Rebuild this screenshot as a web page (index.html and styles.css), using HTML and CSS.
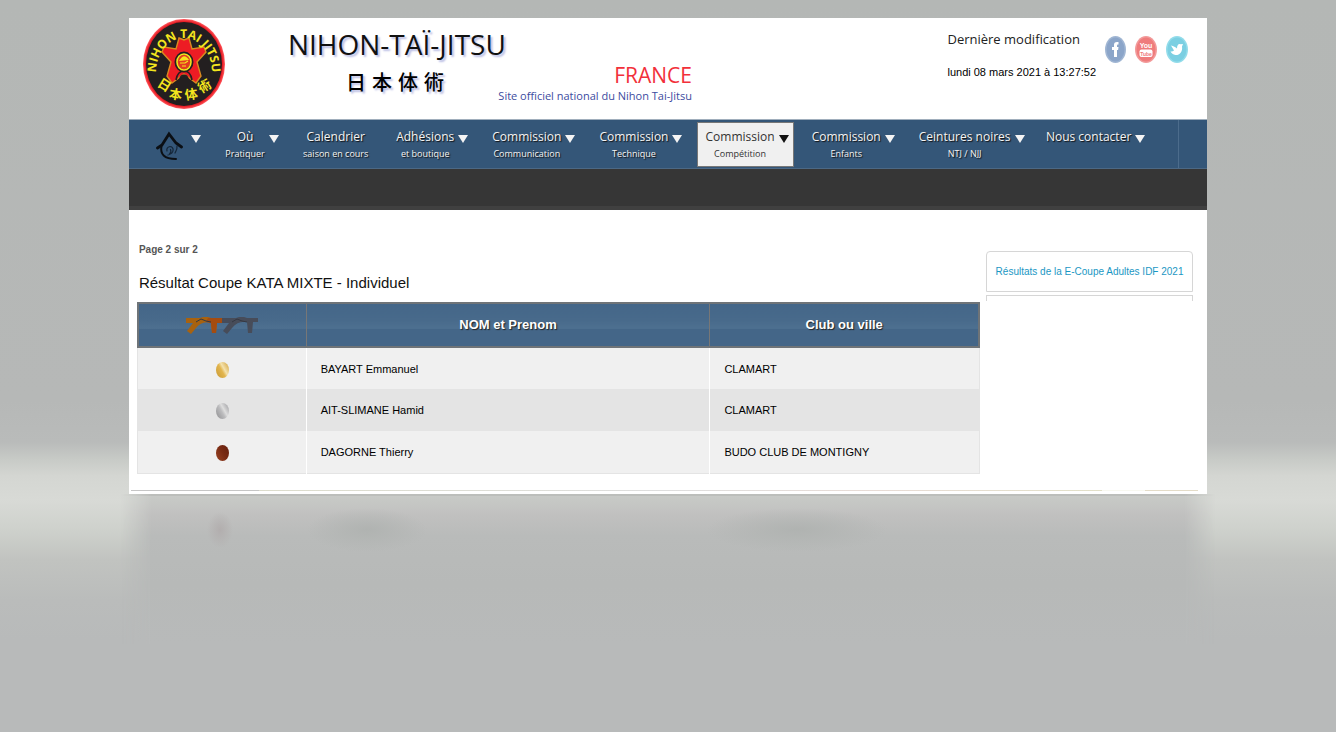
FILE: index.html
```html
<!DOCTYPE html>
<html lang="fr">
<head>
<meta charset="utf-8">
<title>Nihon-Taï-Jitsu France</title>
<link rel="stylesheet" href="styles.css">
</head>
<body>
<div class="page">
  <header class="header">
    <svg class="logo" width="84" height="92" viewBox="0 0 84 92" role="img" aria-label="Nihon Tai Jitsu">
      <defs>
        <path id="arc" d="M14 54A28 34 0 1 1 70 54"/>
        <radialGradient id="ring"><stop offset=".94" stop-color="#e81c24"/><stop offset="1" stop-color="#ff5a60"/></radialGradient>
      </defs>
      <ellipse cx="41" cy="46" rx="41" ry="45" fill="url(#ring)"/>
      <ellipse cx="41" cy="46" rx="38" ry="42" fill="#231f20"/>
      <g transform="translate(-1 0)">
      <path d="M37 20L42 22L47 20L50 31L62 29L64 34L55 44L59 58L54 65L42 56L30 65L25 58L29 44L20 34L22 29L34 31Z" fill="#ed1c24" stroke="#d88a20" stroke-width="1.4"/>
      <path d="M34 62C35 56 38 53 42 53S49 56 50 62M38 61C39 56 45 56 46 61" fill="none" stroke="#231f20" stroke-width="1.6"/>
      <ellipse cx="42" cy="44" rx="8" ry="9" fill="#e43a20" stroke="#231f20" stroke-width="3"/>
      <ellipse cx="42" cy="44" rx="7" ry="8" fill="none" stroke="#f4e51e" stroke-width="1.6"/>
      <path d="M37 43Q42 34 47 42Z" fill="#f4e51e"/>
      <path d="M38 45h5l3-2M40 48h4" fill="none" stroke="#f4e51e" stroke-width="1.2"/>
      <text class="logo-text"><textPath href="#arc" startOffset="50%">NIHON TAI JITSU</textPath></text>
      <text class="logo-kanji" transform="translate(20 71) rotate(32)">日</text>
      <text class="logo-kanji" transform="translate(33 81) rotate(9)">本</text>
      <text class="logo-kanji" transform="translate(50 81) rotate(-9)">体</text>
      <text class="logo-kanji" transform="translate(65 72) rotate(-32)">術</text>
      </g>
    </svg>
    <div class="brand">
      <h1 class="brand-title">NIHON-TAÏ-JITSU</h1>
      <div class="brand-row">
        <div class="brand-kanji"><span>日</span><span>本</span><span>体</span><span>術</span></div>
        <div class="brand-country">FRANCE</div>
      </div>
      <p class="brand-tagline">Site officiel national du Nihon Tai-Jitsu</p>
    </div>
    <div class="updated">
      <p class="updated-label">Dernière modification</p>
      <p class="updated-date">lundi 08 mars 2021 à 13:27:52</p>
    </div>
    <div class="social">
      <a href="#" aria-label="Facebook"><svg width="21" height="27" viewBox="0 0 21 27"><ellipse cx="10.500" cy="13.500" rx="10.500" ry="13.500" fill="#a0b6d3"/><ellipse cx="10.500" cy="13.500" rx="9" ry="12" fill="#8ba5c9"/><path d="M9 21V14H7v-3h2V9C9 6.500 10.200 5.500 13.500 6v2.500C12 8.400 12 8.800 12 11h1.500l-.4 3H12v7Z" fill="#fff"/></svg></a>
      <a href="#" aria-label="YouTube"><svg width="22" height="27" viewBox="0 0 22 27"><ellipse cx="11" cy="13.500" rx="11" ry="13.500" fill="#f29a9a"/><ellipse cx="11" cy="13.500" rx="9.500" ry="12" fill="#ef7c7c"/><text x="11" y="12" class="yt-you">You</text><rect x="4.500" y="13.500" width="13" height="7.500" rx="2" fill="#fff"/><text x="11" y="19.500" class="yt-tube">Tube</text></svg></a>
      <a href="#" aria-label="Twitter"><svg width="22" height="27" viewBox="0 0 22 27"><ellipse cx="11" cy="13.500" rx="11" ry="13.500" fill="#92dcea"/><ellipse cx="11" cy="13.500" rx="9.500" ry="12" fill="#7bcfe2"/><path d="M4.500 15.500C6 15.800 7 15.300 8 14.500L5 9.500C7.500 10 9.500 11 11 12.500C11 9 12.500 7.500 14.500 8.200L17 8L16 10.500C17 16 13 19.500 9.500 19C7 18.600 5.500 17.500 4.500 15.500Z" fill="#fff"/></svg></a>
    </div>
  </header>

  <nav class="nav" aria-label="Menu principal">
    <a href="#" class="item home" aria-label="Accueil">
      <svg width="27" height="30" viewBox="0 0 27 30" fill="none" stroke="#0b0f14" stroke-linecap="round"><path d="M1.500 17L6 14L13 3L20 12L25.500 16" stroke-width="2.800"/><path d="M5.500 15C4 23 8 28 20 28" stroke-width="2"/><path d="M21 15C21.500 18 20 20 19 22M12 24C19 22 18 15.500 14 15.500C11 16 10.500 18 11 20M14.500 18.500C15.500 20.500 14.500 22 13.500 23" stroke-width="1.200" stroke="#152638"/></svg>
      <i class="caret"></i></a>
    <a href="#" class="item"><span class="label wide">Où<small>Pratiquer</small></span><i class="caret"></i></a>
    <a href="#" class="item"><span class="label">Calendrier<small>saison en cours</small></span></a>
    <a href="#" class="item"><span class="label">Adhésions<small>et boutique</small></span><i class="caret"></i></a>
    <a href="#" class="item"><span class="label">Commission<small>Communication</small></span><i class="caret"></i></a>
    <a href="#" class="item"><span class="label">Commission<small>Technique</small></span><i class="caret"></i></a>
    <a href="#" class="item active"><span class="label">Commission<small>Compétition</small></span><i class="caret"></i></a>
    <a href="#" class="item"><span class="label">Commission<small>Enfants</small></span><i class="caret"></i></a>
    <a href="#" class="item"><span class="label">Ceintures noires<small>NTJ / NJJ</small></span><i class="caret"></i></a>
    <a href="#" class="item last"><span class="label">Nous contacter</span><i class="caret"></i></a>
  </nav>
  <div class="subbar"></div>

  <div class="content">
    <main class="main">
      <p class="pager">Page 2 sur 2</p>
      <h2 class="heading">Résultat Coupe KATA MIXTE - Individuel</h2>
      <table class="results">
        <thead>
          <tr>
            <th class="c-rank" scope="col"><svg class="tonfas" width="73" height="18" viewBox="0 0 73 18" role="img" aria-label="Rang">
              <path d="M0 1H14L17 0H22L25 1H36V6H31L30 16H26L25 6C19 4 14 6 10 11L5 17L1 14L7 6H0Z" fill="#a8620f"/>
              <path d="M22 1H36V6H31L30 16H26L25 6L20 5Z" fill="#a44c10"/>
              <path d="M36 1H50L53 0H58L61 1H72V5H67L66 16H62L61 5C55 4 50 6 46 11L41 17L37 14L43 6H36Z" fill="#474c59"/>
              <path d="M10 5L15 2L20 4L25 5M46 5L51 2L56 4L61 5" stroke="#353842" fill="none"/>
            </svg></th>
            <th class="c-name" scope="col">NOM et Prenom</th>
            <th scope="col">Club ou ville</th>
          </tr>
        </thead>
        <tbody>
          <tr><td class="rank"><i class="medal gold"></i></td><td>BAYART Emmanuel</td><td>CLAMART</td></tr>
          <tr><td class="rank"><i class="medal silver"></i></td><td>AIT-SLIMANE Hamid</td><td>CLAMART</td></tr>
          <tr><td class="rank"><i class="medal bronze"></i></td><td>DAGORNE Thierry</td><td>BUDO CLUB DE MONTIGNY</td></tr>
        </tbody>
      </table>
    </main>
    <aside class="side">
      <a href="#" class="side-link">Résultats de la E-Coupe Adultes IDF 2021</a>
      <div class="side-next"></div>
    </aside>
  </div>
  <div class="rule"></div>
</div>
<div class="reflection"></div>
</body>
</html>
```

FILE: styles.css
```css
* { box-sizing: border-box; }
html { min-height: 100%; }
body {
  margin: 0;
  padding-top: 18px;
  min-height: 100vh;
  font-family: "Liberation Sans", sans-serif;
  font-size: 12px;
  color: #000;
  background: linear-gradient(#b4b7b5 0, #b6b8b7 400px, #b9bbba 442px, #c8cbc7 460px, #d4d6d2 476px, #d8dad6 500px, #ced1cc 530px, #c1c3c0 560px, #babcbb 600px, #b8baba 640px, #b8baba 100%);
}
p, h1, h2 { margin: 0; font-weight: normal; }
a { color: inherit; text-decoration: none; }
.page {
  width: 80.7%;
  margin: 0 auto;
  background: #fff;
}

.header {
  display: flex;
  height: 101px;
  padding: 0 19px 0 14px;
  font-family: "Open Sans", sans-serif;
}
.logo { flex: none; }
.logo-text {
  font: bold 12px "Open Sans", sans-serif;
  fill: #f4e51e;
  text-anchor: middle;
}
.logo-kanji {
  font: bold 13px "Noto Sans CJK JP", sans-serif;
  fill: #f4e51e;
  text-anchor: middle;
}
.brand {
  width: 404px;
  margin-left: 61px;
  padding-top: 6px;
}
.brand-title {
  font: 28px/40px "Open Sans", sans-serif;
  color: #111;
  text-shadow: 2px 2px 2px #b9bde4;
  white-space: nowrap;
}
.brand-row {
  display: flex;
  justify-content: space-between;
  height: 24px;
  padding-left: 58px;
}
.brand-kanji {
  display: flex;
  gap: 6px;
  font: 500 20px/36px "Noto Sans CJK JP", sans-serif;
  text-shadow: 2px 2px 2px #b9bde4;
}
.brand-country { font-size: 21px; line-height: 22px; color: #f2303a; }
.brand-tagline {
  font-size: 11px;
  line-height: 16px;
  text-align: right;
  color: #3c4ba0;
}
.updated { margin-left: auto; padding-top: 10px; white-space: nowrap; }
.updated-label { font: 13px/22px "Open Sans", sans-serif; color: #222; }
.updated-date { margin-top: 14px; font: 11px/16px "Liberation Sans", sans-serif; }
.social { display: flex; gap: 9px; margin-left: 9px; padding-top: 18px; }
.social svg { display: block; }
.yt-you { font: bold 7px "Liberation Sans", sans-serif; fill: #fff; text-anchor: middle; }
.yt-tube { font: bold 5px "Liberation Sans", sans-serif; fill: #ef7c7c; text-anchor: middle; }

.nav {
  display: grid;
  grid-template-columns: 69fr 78fr 93fr 96fr 107fr 106fr 106fr 107fr 127fr 145fr;
  height: 50px;
  padding: 0 28px 0 15px;
  background: #345678;
  border-top: 1px solid #a0aebc;
  border-bottom: 1px solid #4c6884;
  color: #f4f4f4;
  font-family: "Open Sans", sans-serif;
  font-size: 12px;
  text-shadow: 1px 1px 1px #111;
}
.item {
  display: flex;
  align-items: flex-start;
  gap: 4px;
  padding: 7px 0 0 12px;
  line-height: 20px;
  white-space: nowrap;
}
.home { gap: 8px; }
.home svg { margin-top: 4px; }
.label { text-align: center; }
.wide { min-width: 40px; }
.label small { display: block; font-size: 9px; line-height: 14px; }
.caret {
  flex: none;
  margin-top: 8px;
  border: 5px solid transparent;
  border-top: 8px solid #f4f4f4;
  border-bottom: 0;
}
.active {
  margin: 2px 6px 1px 3px;
  padding: 4px 0 0 8px;
  background: #f0f0f0;
  border: 1px solid #777;
  color: #333;
  text-shadow: none;
}
.active .caret { border-top-color: #111; }
.last { border-right: 1px solid #4c6c8c; }
.subbar {
  height: 41px;
  background: #363636;
  border-bottom: 4px solid #404040;
}

.content { display: flex; gap: 6px; padding: 32px 14px 0 8px; }
.main { flex: 1; }
.pager { padding-left: 2px; font-size: 10px; line-height: 16px; font-weight: bold; color: #555; }
.heading { padding-left: 2px; margin: 13px 0 7px; font-size: 15px; line-height: 24px; color: #111; }
.results { width: 100%; table-layout: fixed; border-collapse: collapse; border: 1px solid #e4e4e4; }
.results th {
  height: 44px;
  padding: 0 0 2px;
  border: 1px solid #777;
  background: linear-gradient(#446688, #486a8b 40%, #4e7090 58%, #446688 60%, #446688);
  color: #fff;
  font-size: 13px;
  text-shadow: 1px 1px 1px #222;
}
.results thead { border: 2px solid #6f7478; }
.c-rank { width: 20%; }
.c-name { width: 48%; }
.tonfas { display: block; margin: 4px auto 0; }
.results td {
  height: 42px;
  padding: 0 14px;
  border-right: 1px solid #fff;
  background: #f0f0f0;
  font-size: 11px;
}
.results td:last-child { border-right-color: #e4e4e4; }
.results tr:nth-child(2) td { background: #e4e4e4; }
.results .rank { text-align: center; }
.medal { display: block; width: 13px; height: 16px; margin: 2px auto 0; border-radius: 50%; }
.gold { background: linear-gradient(60deg, #c99a35, #e2b54e 45%, #f4e2ae 60%, #cf9c30); }
.silver { background: linear-gradient(60deg, #8e8e90, #bcbcbe 45%, #dedede 60%, #96969a); }
.bronze { background: linear-gradient(60deg, #9a4424, #7a2c14 50%, #65200e); }

.side { width: 207px; padding-top: 9px; }
.side-link {
  display: block;
  border: 1px solid #d6d6d6;
  border-radius: 4px 4px 0 0;
  font-size: 10px;
  line-height: 39px;
  text-align: center;
  color: #1a97c4;
  white-space: nowrap;
}
.side-next { height: 6px; margin-top: 3px; border: 1px solid #d6d6d6; border-bottom: 0; }
.rule {
  height: 20px;
  margin: 0 9px 0 2px;
  background: linear-gradient(90deg, #c6c6c6 12%, #dcdccc 12%, #dedede 50%, #e8dcd6 70%, #e2e0c8 91%, #f8f8f0 91%, #f8f8f0 95%, #e4dcc8 95%) 0 16px / 100% 1px no-repeat;
}
.reflection {
  width: 84%;
  height: 150px;
  margin: 0 auto;
  background:
    radial-gradient(closest-side, #b2aeae, transparent) 100px 18px / 26px 36px no-repeat,
    radial-gradient(closest-side, #b0b3b1, transparent) 200px 14px / 120px 44px no-repeat,
    radial-gradient(closest-side, #b0b3b1, transparent) 600px 14px / 180px 44px no-repeat,
    linear-gradient(#bcbebb 2px, #c8cac7 2px, #c0c0bf 22px, #b9bbba 42px, #b7b9b8 90px, #b8baba);
  -webkit-mask: linear-gradient(90deg, transparent 14px, #000 44px, #000 calc(100% - 44px), transparent calc(100% - 14px));
  mask: linear-gradient(90deg, transparent 14px, #000 44px, #000 calc(100% - 44px), transparent calc(100% - 14px));
}
```
